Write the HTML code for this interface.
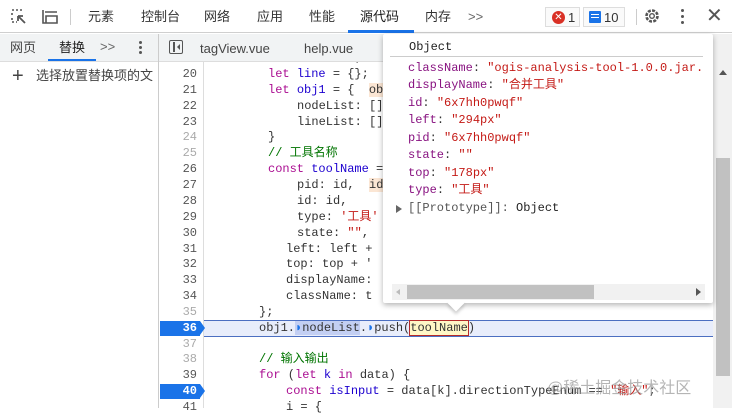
<!DOCTYPE html>
<html><head><meta charset="utf-8"><style>
*{margin:0;padding:0;box-sizing:border-box}
body{width:732px;height:408px;overflow:hidden;background:#fff;font-family:"Liberation Sans","Noto Sans CJK SC",sans-serif;position:relative;color:#333}
.a{position:absolute;white-space:pre;line-height:16px}
.m{font-family:"Liberation Mono","Noto Sans CJK SC",monospace;font-size:12px;line-height:15px;height:15px}
.t{font-size:13px;color:#333;line-height:17px}
.k{color:#aa0d91}.v{color:#1c00cf}.s{color:#c41a16}.c{color:#007400}.p{color:#881280}
.ln{color:#555;text-align:right;width:22px;font-family:"Liberation Mono",monospace;font-size:12px;line-height:15px}
.lg{color:#aaa}
</style></head><body>
<div class="a ln" style="left:175px;top:51px">19</div>
<div class="a m" style="left:268px;top:51px"><span class="k">let</span> <span class="v">i</span> = <span class="k">null</span>;</div>
<!-- top toolbar -->
<div class="a" style="left:0;top:0;width:732px;height:33px;background:#fff;border-bottom:1px solid #cfcfcf"></div>
<svg class="a" style="left:10px;top:8px" width="18" height="18" viewBox="0 0 18 18"><path d="M2 2h2M6 2h2M10 2h2M2 5v2M2 10v2M2 14h2M6 14h1" stroke="#555" stroke-width="1.6"/><path d="M8 8l7 7M8 8h5M8 8v5" stroke="#555" stroke-width="1.8" fill="none"/></svg>
<svg class="a" style="left:39px;top:8px" width="20" height="18" viewBox="0 0 20 18"><path d="M4 2v13h10M6 4h12M7 8h11v7H7z" stroke="#555" stroke-width="1.6" fill="none"/></svg>
<div class="a" style="left:70px;top:9px;width:1px;height:16px;background:#ccc"></div>
<div class="a t" style="left:88px;top:8px">元素</div>
<div class="a t" style="left:141px;top:8px">控制台</div>
<div class="a t" style="left:204px;top:8px">网络</div>
<div class="a t" style="left:257px;top:8px">应用</div>
<div class="a t" style="left:309px;top:8px">性能</div>
<div class="a t" style="left:360px;top:8px;color:#1a1a1a">源代码</div>
<div class="a" style="left:348px;top:30px;width:66px;height:3px;background:#1a73e8"></div>
<div class="a t" style="left:425px;top:8px">内存</div>
<div class="a t" style="left:468px;top:8px;color:#666">&gt;&gt;</div>
<div class="a" style="left:545px;top:7px;width:35px;height:20px;border:1px solid #ddd;background:#fafafa"></div>
<div class="a" style="left:552px;top:11px;width:13px;height:13px;border-radius:50%;background:#d93025;color:#fff;font-size:10px;text-align:center;line-height:13px">✕</div>
<div class="a t" style="left:568px;top:9px">1</div>
<div class="a" style="left:583px;top:7px;width:42px;height:20px;border:1px solid #ddd;background:#fafafa"></div>
<div class="a" style="left:589px;top:11px;width:12px;height:12px;background:#1a73e8;border-radius:1px"></div>
<div class="a" style="left:591px;top:14px;width:8px;height:1px;background:#fff;box-shadow:0 3px 0 #fff"></div>
<div class="a t" style="left:604px;top:9px">10</div>
<div class="a" style="left:636px;top:9px;width:1px;height:16px;background:#ccc"></div>
<svg class="a" style="left:643px;top:7px" width="18" height="18" viewBox="0 0 18 18"><circle cx="9" cy="9" r="5.5" stroke="#555" stroke-width="2.6" fill="none" stroke-dasharray="3 1.3"/><circle cx="9" cy="9" r="2.3" stroke="#555" stroke-width="1.4" fill="none"/></svg>
<div class="a" style="left:681px;top:9px;width:3px;height:3px;background:#555;border-radius:50%;box-shadow:0 6px 0 #555,0 12px 0 #555"></div>
<div class="a" style="left:706px;top:5px;font-size:20px;line-height:22px;color:#555">✕</div>

<!-- second row -->
<div class="a" style="left:0;top:34px;width:732px;height:28px;background:#f1f3f4;border-bottom:1px solid #ddd"></div>
<div class="a t" style="left:10px;top:39px;color:#444">网页</div>
<div class="a t" style="left:59px;top:39px;color:#222">替换</div>
<div class="a" style="left:48px;top:59px;width:48px;height:2px;background:#1a73e8"></div>
<div class="a t" style="left:100px;top:38px;color:#666">&gt;&gt;</div>
<div class="a" style="left:139px;top:41px;width:3px;height:3px;background:#555;border-radius:50%;box-shadow:0 5px 0 #555,0 10px 0 #555"></div>
<div class="a" style="left:158px;top:34px;width:1px;height:374px;background:#ccc"></div>
<div class="a" style="left:169px;top:40px;width:14px;height:14px;border:1.5px solid #555;border-radius:2px"></div>
<div class="a" style="left:173px;top:42px;width:1.5px;height:10px;background:#555"></div>
<div class="a" style="left:177px;top:44px;width:0;height:0;border:3px solid transparent;border-right:3px solid #555;border-left:0"></div>
<div class="a t" style="left:200px;top:40px;color:#444">tagView.vue</div>
<div class="a t" style="left:304px;top:40px;color:#444">help.vue</div>

<!-- left panel -->
<div class="a" style="left:12px;top:64px;font-size:20px;color:#444;line-height:24px">+</div>
<div class="a t" style="left:36px;top:67px;color:#444">选择放置替换项的文</div>

<!-- gutter -->
<div class="a" style="left:203px;top:62px;width:1px;height:346px;background:#ddd"></div>
<div class="a" style="left:713px;top:34px;width:19px;height:374px;background:#f1f1f1"></div>
<div class="a" style="left:716px;top:158px;width:14px;height:218px;background:#c1c1c1"></div>
<div class="a" style="left:719px;top:70px;width:0;height:0;border:4px solid transparent;border-bottom:5px solid #555;border-top:0"></div>

<!-- line 36 highlight -->
<div class="a" style="left:204px;top:320px;width:509px;height:17px;background:#e8edfb;border-top:1px solid #4c6fc1;border-bottom:1px solid #4c6fc1"></div>
<div class="a" style="left:160px;top:321px;width:40px;height:15px;background:#1a73e8"></div>
<div class="a" style="left:200px;top:321px;width:0;height:0;border-top:7.5px solid transparent;border-bottom:7.5px solid transparent;border-left:5px solid #1a73e8"></div>
<div class="a" style="left:160px;top:384px;width:40px;height:15px;background:#1a73e8"></div>
<div class="a" style="left:200px;top:384px;width:0;height:0;border-top:7.5px solid transparent;border-bottom:7.5px solid transparent;border-left:5px solid #1a73e8"></div>

<!-- line numbers -->
<div class="a ln" style="left:175px;top:67px">20</div>
<div class="a ln" style="left:175px;top:83px">21</div>
<div class="a ln" style="left:175px;top:99px">22</div>
<div class="a ln" style="left:175px;top:115px">23</div>
<div class="a ln lg" style="left:175px;top:130px">24</div>
<div class="a ln lg" style="left:175px;top:146px">25</div>
<div class="a ln" style="left:175px;top:162px">26</div>
<div class="a ln" style="left:175px;top:178px">27</div>
<div class="a ln" style="left:175px;top:194px">28</div>
<div class="a ln" style="left:175px;top:210px">29</div>
<div class="a ln" style="left:175px;top:226px">30</div>
<div class="a ln" style="left:175px;top:242px">31</div>
<div class="a ln" style="left:175px;top:257px">32</div>
<div class="a ln" style="left:175px;top:273px">33</div>
<div class="a ln" style="left:175px;top:289px">34</div>
<div class="a ln lg" style="left:175px;top:305px">35</div>
<div class="a ln" style="left:175px;top:321px;color:#fff;font-weight:bold">36</div>
<div class="a ln lg" style="left:175px;top:337px">37</div>
<div class="a ln lg" style="left:175px;top:352px">38</div>
<div class="a ln" style="left:175px;top:368px">39</div>
<div class="a ln" style="left:175px;top:384px;color:#fff;font-weight:bold">40</div>
<div class="a ln" style="left:175px;top:400px">41</div>

<!-- code -->
<div class="a m" style="left:268px;top:67px"><span class="k">let</span> <span class="v">line</span> = {};</div>
<div class="a m" style="left:268px;top:83px"><span class="k">let</span> <span class="v">obj1</span> = {  <span style="background:#fbe6d4">ob</span></div>
<div class="a m" style="left:297px;top:99px">nodeList: []</div>
<div class="a m" style="left:297px;top:115px">lineList: []</div>
<div class="a m" style="left:268px;top:130px">}</div>
<div class="a m c" style="left:268px;top:146px">// 工具名称</div>
<div class="a m" style="left:268px;top:162px"><span class="k">const</span> <span class="v">toolName</span> =</div>
<div class="a m" style="left:297px;top:178px">pid: id,  <span style="background:#fbe6d4">id</span></div>
<div class="a m" style="left:297px;top:194px">id: id,</div>
<div class="a m" style="left:297px;top:210px">type: <span class="s">'工具'</span></div>
<div class="a m" style="left:297px;top:226px">state: <span class="s">""</span>,</div>
<div class="a m" style="left:286px;top:242px">left: left +</div>
<div class="a m" style="left:286px;top:257px">top: top + '</div>
<div class="a m" style="left:286px;top:273px">displayName:</div>
<div class="a m" style="left:286px;top:289px">className: t</div>
<div class="a m" style="left:259px;top:305px">};</div>
<div class="a m" style="left:259px;top:321px">obj1.<span style="background:#c3cff3"><span style="color:#1a73e8">◗</span>nodeList</span>.<span style="color:#1a73e8">◗</span>push(<span style="background:#fff7c7;outline:1px solid #b52a2a">toolName</span>)</div>
<div class="a m c" style="left:259px;top:352px">// 输入输出</div>
<div class="a m" style="left:259px;top:368px"><span class="k">for</span> (<span class="k">let</span> <span class="v">k</span> <span class="k">in</span> data) {</div>
<div class="a m" style="left:286px;top:384px"><span class="k">const</span> <span class="v">isInput</span> = data[k].directionTypeEnum == <span class="s">"输入"</span>;</div>
<div class="a m" style="left:286px;top:400px">i = {</div>
<div class="a" style="left:547px;top:379px;font-size:16px;line-height:20px;color:rgba(150,150,150,.7)">@稀土掘金技术社区</div>

<!-- popup -->
<div class="a" style="left:383px;top:34px;width:330px;height:269px;background:#fff;box-shadow:0 2px 6px rgba(0,0,0,.3);border-radius:2px"></div>
<div class="a" style="left:450px;top:297px;width:12px;height:12px;background:#fff;transform:rotate(45deg);box-shadow:2px 2px 3px rgba(0,0,0,.2)"></div>
<div class="a" style="left:444px;top:290px;width:30px;height:12px;background:#fff"></div>
<div class="a m" style="left:409px;top:40px;color:#222">Object</div>
<div class="a" style="left:390px;top:56px;width:313px;height:1px;background:#ccc"></div>
<div class="a m" style="left:408px;top:61px"><span class="p">className</span>: <span class="s">"ogis-analysis-tool-1.0.0.jar.</span></div>
<div class="a m" style="left:408px;top:78px"><span class="p">displayName</span>: <span class="s">"合并工具"</span></div>
<div class="a m" style="left:408px;top:96px"><span class="p">id</span>: <span class="s">"6x7hh0pwqf"</span></div>
<div class="a m" style="left:408px;top:113px"><span class="p">left</span>: <span class="s">"294px"</span></div>
<div class="a m" style="left:408px;top:131px"><span class="p">pid</span>: <span class="s">"6x7hh0pwqf"</span></div>
<div class="a m" style="left:408px;top:148px"><span class="p">state</span>: <span class="s">""</span></div>
<div class="a m" style="left:408px;top:166px"><span class="p">top</span>: <span class="s">"178px"</span></div>
<div class="a m" style="left:408px;top:183px"><span class="p">type</span>: <span class="s">"工具"</span></div>
<div class="a" style="left:396px;top:205px;width:0;height:0;border-top:4px solid transparent;border-bottom:4px solid transparent;border-left:6px solid #666"></div>
<div class="a m" style="left:408px;top:201px;color:#555">[[Prototype]]: <span style="color:#222">Object</span></div>
<div class="a" style="left:392px;top:284px;width:313px;height:16px;background:#f1f1f1"></div>
<div class="a" style="left:407px;top:285px;width:187px;height:14px;background:#c1c1c1"></div>
<div class="a" style="left:396px;top:289px;width:0;height:0;border-top:3px solid transparent;border-bottom:3px solid transparent;border-right:4px solid #bbb"></div>
<div class="a" style="left:696px;top:288px;width:0;height:0;border-top:4px solid transparent;border-bottom:4px solid transparent;border-left:5px solid #555"></div>
</body></html>
